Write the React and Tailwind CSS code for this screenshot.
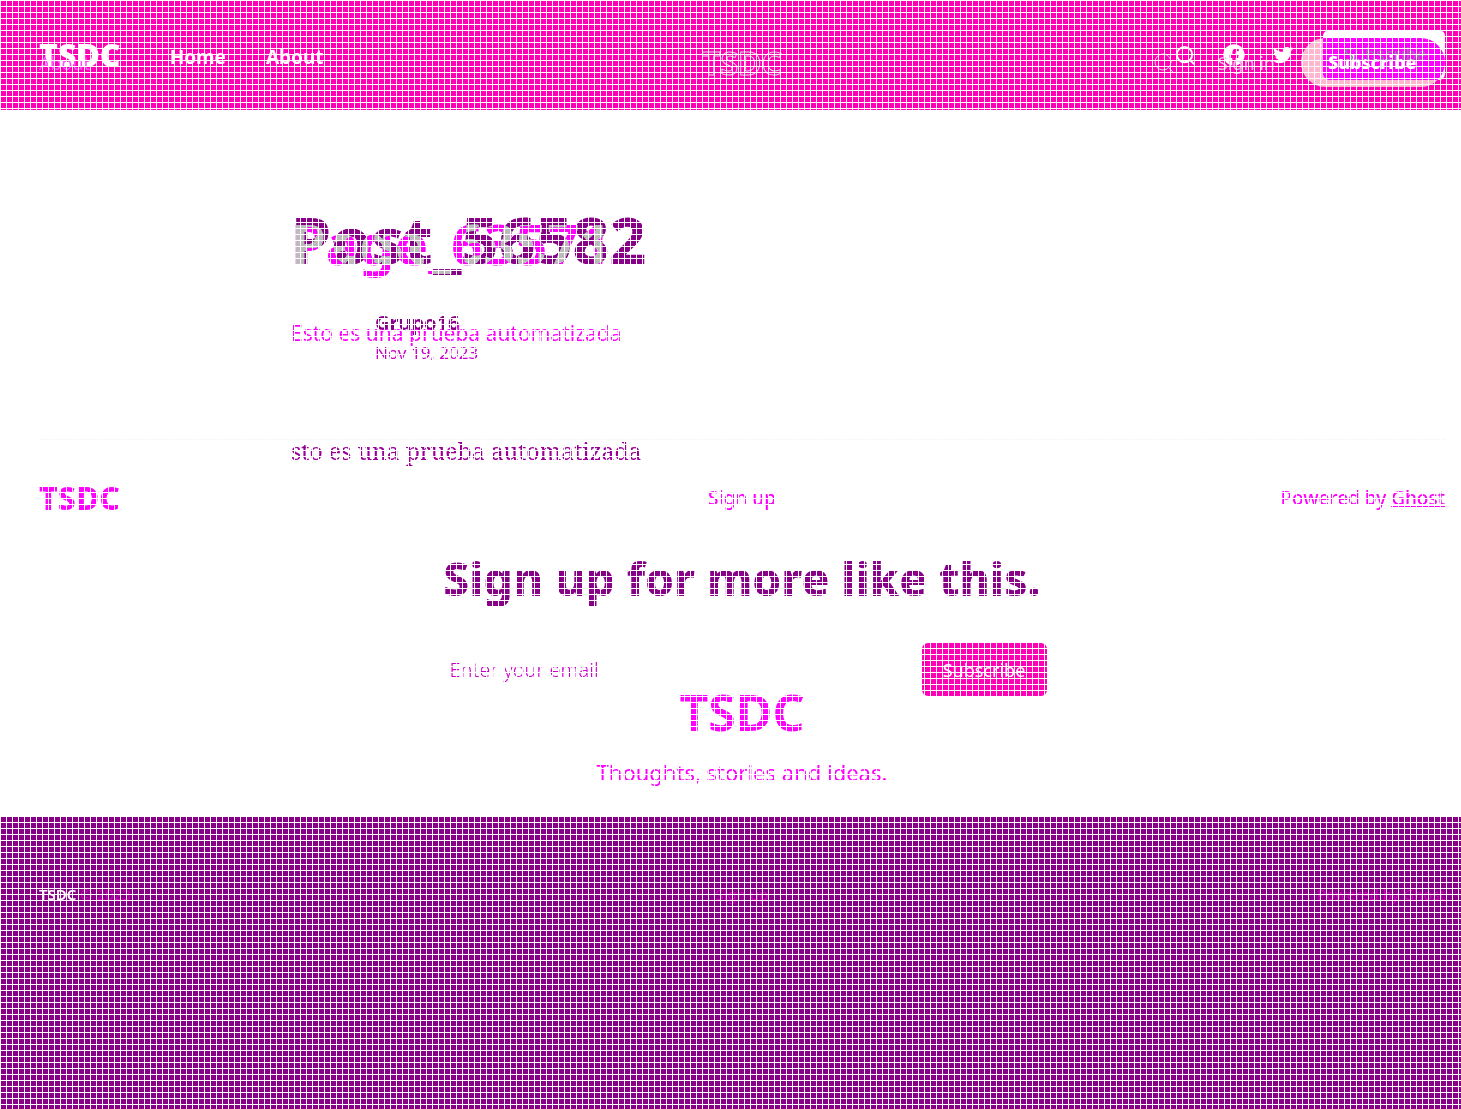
import React from "react";
import { Search } from "lucide-react";
import { FaFacebook, FaTwitter } from "react-icons/fa";

const outline = "text-transparent [-webkit-text-stroke:1px_#dcd5dc]";

function MainHeader() {
  return (
    <header className="flex h-[110px] items-center bg-[#ff00b7] pr-4 pl-[39px] text-white">
      <a href="#home" className="text-[32px] leading-10 font-black">TSDC</a>
      <nav className="ml-[49px] flex gap-10 pt-1 text-[19px] leading-6 font-bold">
        <a href="#home">Home</a>
        <a href="#about">About</a>
      </nav>
      <div className="ml-auto flex items-center">
        <button aria-label="Search" className="mr-[26px]"><Search size={23} strokeWidth={2} /></button>
        <a href="#facebook" aria-label="Facebook" className="mr-7"><FaFacebook size={22} /></a>
        <a href="#twitter" aria-label="Twitter"><FaTwitter size={20} /></a>
      </div>
      <div className="ml-[30px] h-[50px] w-[122px]" />
    </header>
  );
}

function CenteredHeader() {
  return (
    <header className="grid h-[125px] grid-cols-[1fr_auto_1fr] items-center pr-4 pl-[39px]">
      <a href="#about" className="justify-self-start text-lg leading-6 text-[#ff50ff]">About</a>
      <a href="#top" className={"text-[32px] leading-10 font-bold " + outline}>TSDC</a>
      <div className="flex items-center justify-self-end">
        <button aria-label="Search" className="mr-[42px] text-[#e8c8e0]"><Search size={24} strokeWidth={1} /></button>
        <a href="#signin" className="mr-[26px] text-lg leading-6 text-[#e8b8dc]">Sign in</a>
        <button className="h-[49px] w-[144px] rounded-full bg-[#ffb7d0] text-lg font-bold text-white">Subscribe</button>
      </div>
    </header>
  );
}

function SubscribeButton() {
  return (
    <div className="flex h-[110px] items-center justify-end pr-4">
      <button className="relative h-[50px] w-[122px] overflow-hidden rounded-md bg-white">
        <span className="absolute top-2 -left-[22px] h-[49px] w-[144px] rounded-full bg-[#ff00ff]" />
        <span className="absolute top-5 left-[5px] text-lg leading-6 font-extrabold text-white" aria-hidden="true">Subscribe</span>
        <span className="absolute top-3 left-[21px] text-lg leading-6 text-[#a070b0]">Subscribe</span>
      </button>
    </div>
  );
}

function PostLayer() {
  return (
    <article className="mx-auto w-full max-w-[902px] pt-[95px]">
      <h1 className="text-[64px] leading-[70px] font-extrabold text-[#880088]">Post_56582</h1>
      <div className="mt-9 pl-[84px]">
        <h4 className="text-xl leading-6 font-bold text-[#880088]">Grupo16</h4>
        <time className="mt-1.5 block text-[17px] leading-6 text-[#cc00cc]">Nov 19, 2023</time>
      </div>
      <p className="mt-[66px] font-['Noto_Serif','Liberation_Serif',serif] text-[23px] leading-10 text-[#990099]">sto es una prueba automatizada</p>
      <section className="mt-[78px]">
        <h2 className="text-center text-[46px] leading-[58px] font-extrabold text-[#880088]">Sign up for more like this.</h2>
        <form className="mx-auto mt-9 flex w-[609px] items-center">
          <input type="email" aria-label="Email" placeholder="Enter your email" className="h-[53px] min-w-0 flex-1 pl-3 text-xl font-light outline-none placeholder:text-[#cc00cc]" />
          <button type="button" className="h-[53px] w-[125px] rounded-md bg-[#ff00b7] text-lg text-white">Subscribe</button>
        </form>
      </section>
    </article>
  );
}

function PageLayer() {
  return (
    <article>
      <div className="mx-auto w-full max-w-[902px] pt-[101px]">
        <div className="relative text-[56px] leading-[64px] font-bold after:absolute after:top-0 after:left-0 after:text-[#ffbbff] after:mix-blend-darken after:content-['Page\_63571']">
          <h1 className="relative after:absolute after:top-0 after:left-0 after:text-[#bb00bb] after:mix-blend-lighten after:content-['Page\_63571']">
            <span className="text-[#00ff00] mix-blend-difference">Page_63571</span>
          </h1>
        </div>
        <p className="mt-[42px] text-[21px] leading-8 text-[#ff00ff]">Esto es una prueba automatizada</p>
      </div>
      <div className="mt-[90px] grid grid-cols-[1fr_auto_1fr] items-center border-t border-[#f8f8f8] pt-[38px] text-[19px] leading-6 font-medium text-[#ff00ff]">
        <a href="#top" className="justify-self-start text-[32px] leading-10 font-extrabold">TSDC</a>
        <a href="#signup">Sign up</a>
        <p className="justify-self-end">Powered by <a href="#ghost" className="underline">Ghost</a></p>
      </div>
      <div className="mt-[166px] text-center text-[#ff00ff]">
        <h2 className="text-[50px] leading-[56px] font-bold">TSDC</h2>
        <p className="mt-4 text-[22px] leading-8">Thoughts, stories and ideas.</p>
      </div>
    </article>
  );
}

export default function App() {
  return (
    <div className="relative isolate flex min-h-screen flex-col bg-white font-['Noto_Sans',sans-serif]">
      <div className="grid grid-cols-1 *:[grid-area:1/1]">
        <MainHeader />
        <CenteredHeader />
        <SubscribeButton />
      </div>
      <main className="-mt-[15px] grid grid-cols-1 pr-4 pl-[39px] *:[grid-area:1/1]">
        <PostLayer />
        <PageLayer />
      </main>
      <footer className="mt-[29px] grid flex-1 grid-cols-[1fr_auto_1fr] content-start bg-[#880088] pt-[65px] pr-4 pl-[39px] text-[15px] leading-6 text-[#d000b8]">
        <p><a href="#top" className="font-semibold text-white">TSDC</a> © 2023</p>
        <a href="#signup">Sign up</a>
        <a href="#ghost" className="justify-self-end">Powered by Ghost</a>
      </footer>
      <div className="pointer-events-none absolute inset-0 bg-[linear-gradient(to_right,white_1px,transparent_1px),linear-gradient(to_bottom,white_1px,transparent_1px)] bg-size-[6px_6px]" />
    </div>
  );
}
